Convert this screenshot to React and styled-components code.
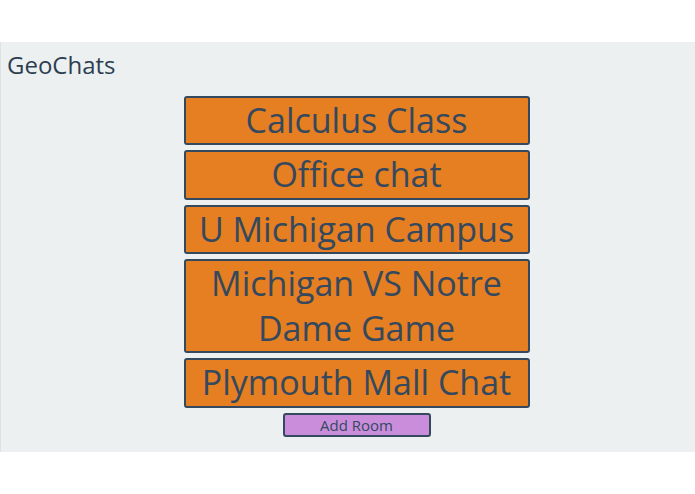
import styled, { createGlobalStyle } from 'styled-components';

const GlobalStyle = createGlobalStyle`
  body {
    margin: 0;
    background: #ffffff;
    font-family: "Open Sans", "Noto Sans", sans-serif;
  }
`;

const Page = styled.div`
  padding-top: 42px;
`;

const Panel = styled.div`
  background: #ecf0f1;
  border-left: 1px solid #dde2e4;
  height: 410px;
  box-sizing: border-box;
  padding: 6px 6px 0;
`;

const Title = styled.h1`
  margin: 0;
  font-size: 24px;
  font-weight: 400;
  line-height: 33px;
  color: #2c3e50;
`;

const RoomList = styled.div`
  display: flex;
  flex-direction: column;
  align-items: center;
  gap: 5px;
  margin-top: 15px;
  padding-left: 17px;
`;

const Room = styled.div`
  width: 346px;
  box-sizing: border-box;
  background: #e67e22;
  border: 2px solid #34495e;
  border-radius: 3px;
  color: #34495e;
  font-size: 34px;
  line-height: 45.3px;
  text-align: center;
`;

const AddButton = styled.button`
  width: 148px;
  height: 24px;
  margin-top: 0;
  background: #c98ddc;
  border: 2px solid #34495e;
  border-radius: 3px;
  color: #34495e;
  font-family: "Open Sans", "Noto Sans", sans-serif;
  font-size: 15px;
  line-height: 18px;
  padding: 0;
  cursor: pointer;
`;

const rooms = [
  'Calculus Class',
  'Office chat',
  'U Michigan Campus',
  'Michigan VS Notre Dame Game',
  'Plymouth Mall Chat',
];

export default function App() {
  return (
    <Page>
      <GlobalStyle />
      <Panel>
        <Title>GeoChats</Title>
        <RoomList>
          {rooms.map((name) => (
            <Room key={name}>{name}</Room>
          ))}
          <AddButton>Add Room</AddButton>
        </RoomList>
      </Panel>
    </Page>
  );
}
